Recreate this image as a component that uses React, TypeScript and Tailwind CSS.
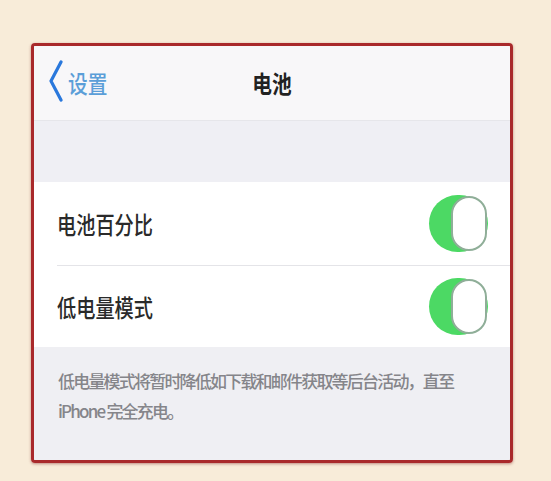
import { ReactNode } from 'react'

const fontStack = "font-['Noto_Sans_CJK_SC','Noto_Sans',sans-serif]"

function Toggle() {
  return (
    <div className="flex h-[57px] w-[59px] justify-end rounded-full bg-[#4cd964] p-[1px]">
      <div className="h-full w-[36px] rounded-full border-2 border-[#8fae98] bg-white" />
    </div>
  )
}

function SettingRow({ label, children, divider }: { label: string; children: ReactNode; divider?: boolean }) {
  return (
    <div className="bg-white pl-[23px]">
      <div
        className={`flex items-center justify-between pr-[22px] ${
          divider ? 'h-[84px] border-b border-[#e4e4e8]' : 'h-[81px]'
        }`}
      >
        <span className="origin-left scale-x-[0.8] text-[24px] font-medium text-[#2a2a2a]">{label}</span>
        {children}
      </div>
    </div>
  )
}

export default function App() {
  return (
    <div className={`min-h-[481px] w-full bg-[#f8ecd9] pl-[31px] pt-[43px] ${fontStack}`}>
      <div className="flex h-[420px] w-[482px] flex-col overflow-hidden rounded-[4px] border-[3px] border-[#a9292b] shadow-[0_1px_3px_rgba(120,20,20,0.45)]">
        {/* nav bar */}
        <div className="relative flex h-[75px] shrink-0 items-center border-b border-[#e6e6ea] bg-[#f8f7f9] pl-[14px]">
          <svg width="16" height="42" viewBox="0 0 16 42" className="mt-[-4px]">
            <polyline
              points="13,2 3,21 13,40"
              fill="none"
              stroke="#2a78dc"
              strokeWidth="3.2"
              strokeLinecap="round"
              strokeLinejoin="round"
            />
          </svg>
          <span className="ml-[4px] origin-left scale-x-[0.82] text-[24px] font-medium text-[#5b9ed8]">设置</span>
          <div className="absolute inset-x-0 top-0 flex h-full items-center justify-center">
            <span className="scale-x-[0.82] text-[24px] font-semibold text-[#222]">电池</span>
          </div>
        </div>

        <div className="h-[61px] shrink-0 bg-[#efeff4]" />

        <SettingRow label="电池百分比" divider>
          <Toggle />
        </SettingRow>
        <SettingRow label="低电量模式">
          <Toggle />
        </SettingRow>

        {/* footer note */}
        <div className="flex-1 bg-[#efeff3] pl-[24px] pr-[20px] pt-[19px] text-[17px] font-medium leading-[30px] tracking-[-1.8px] text-[#85858a]">
          <p>低电量模式将暂时降低如下载和邮件获取等后台活动，直至</p>
          <p>iPhone 完全充电。</p>
        </div>
      </div>
    </div>
  )
}
